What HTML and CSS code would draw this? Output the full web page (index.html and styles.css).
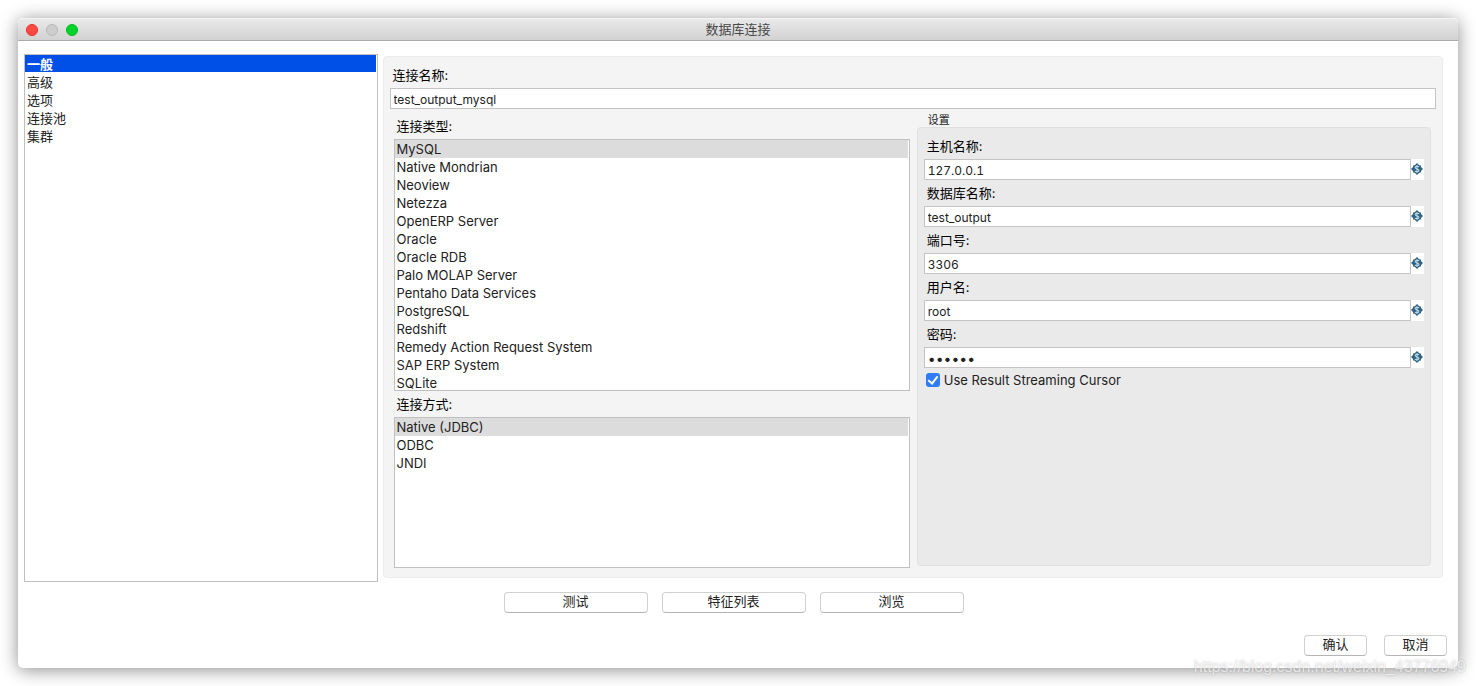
FILE: index.html
```html
<!DOCTYPE html>
<html lang="zh-CN">
<head>
<meta charset="utf-8">
<meta name="viewport" content="width=device-width, initial-scale=1">
<title>数据库连接</title>
<link rel="stylesheet" href="styles.css">
</head>
<body>
<svg class="sprite" aria-hidden="true">
  <symbol id="variable" viewBox="0 0 12 12">
    <path d="M6 0 L12 6 L6 12 L0 6 Z" fill="#2f6485"/>
    <path d="M2 2.500h8v7H2z" fill="#2f6485"/>
    <path d="M8 3.9C7.5 3 4.1 2.800 4.100 4.600C4.100 6.300 7.900 5.600 7.900 7.400C7.900 9.200 4.500 9 4 8M6 2v8" fill="none" stroke="#c3d7e3" stroke-width="1.100"/>
  </symbol>
</svg>
<main class="window">
  <header class="titlebar">
    <div class="lights">
      <button class="light close" type="button" aria-label="关闭"></button>
      <button class="light minimize" type="button" aria-label="最小化" disabled></button>
      <button class="light maximize" type="button" aria-label="最大化"></button>
    </div>
    <h1 class="title">数据库连接</h1>
  </header>
  <form class="content">
    <div class="workspace">
      <ul class="list categories" role="listbox" aria-label="分类">
        <li class="item active" role="option" aria-selected="true" tabindex="0">一般</li>
        <li class="item" role="option">高级</li>
        <li class="item" role="option">选项</li>
        <li class="item" role="option">连接池</li>
        <li class="item" role="option">集群</li>
      </ul>
      <section class="panel">
        <label class="label" for="name">连接名称:</label>
        <input class="input" id="name" type="text" value="test_output_mysql">
        <div class="columns">
          <div class="choices">
            <span class="label" id="type-label">连接类型:</span>
            <ul class="list types" role="listbox" aria-labelledby="type-label">
              <li class="item selected" role="option" aria-selected="true" tabindex="0">MySQL</li>
              <li class="item" role="option">Native Mondrian</li>
              <li class="item" role="option">Neoview</li>
              <li class="item" role="option">Netezza</li>
              <li class="item" role="option">OpenERP Server</li>
              <li class="item" role="option">Oracle</li>
              <li class="item" role="option">Oracle RDB</li>
              <li class="item" role="option">Palo MOLAP Server</li>
              <li class="item" role="option">Pentaho Data Services</li>
              <li class="item" role="option">PostgreSQL</li>
              <li class="item" role="option">Redshift</li>
              <li class="item" role="option">Remedy Action Request System</li>
              <li class="item" role="option">SAP ERP System</li>
              <li class="item" role="option">SQLite</li>
            </ul>
            <span class="label" id="access-label">连接方式:</span>
            <ul class="list access" role="listbox" aria-labelledby="access-label">
              <li class="item selected" role="option" aria-selected="true" tabindex="0">Native (JDBC)</li>
              <li class="item" role="option">ODBC</li>
              <li class="item" role="option">JNDI</li>
            </ul>
          </div>
          <fieldset class="settings">
            <legend class="legend">设置</legend>
            <div class="group">
              <label class="label" for="host">主机名称:</label>
              <div class="field"><input class="input" id="host" type="text" value="127.0.0.1"><span class="variable"><svg class="icon"><use href="#variable"/></svg></span></div>
              <label class="label" for="database">数据库名称:</label>
              <div class="field"><input class="input" id="database" type="text" value="test_output"><span class="variable"><svg class="icon"><use href="#variable"/></svg></span></div>
              <label class="label" for="port">端口号:</label>
              <div class="field"><input class="input" id="port" type="text" value="3306"><span class="variable"><svg class="icon"><use href="#variable"/></svg></span></div>
              <label class="label" for="user">用户名:</label>
              <div class="field"><input class="input" id="user" type="text" value="root"><span class="variable"><svg class="icon"><use href="#variable"/></svg></span></div>
              <label class="label" for="password">密码:</label>
              <div class="field"><input class="input password" id="password" type="password" value="secret"><span class="variable"><svg class="icon"><use href="#variable"/></svg></span></div>
              <label class="check"><input class="checkbox" type="checkbox" checked>Use Result Streaming Cursor</label>
            </div>
          </fieldset>
        </div>
      </section>
    </div>
    <div class="actions">
      <button class="button wide" type="button">测试</button>
      <button class="button wide" type="button">特征列表</button>
      <button class="button wide" type="button">浏览</button>
    </div>
  </form>
  <footer class="footer">
    <button class="button" type="button">确认</button>
    <button class="button" type="button">取消</button>
  </footer>
</main>
<span class="watermark">https://blog.csdn.net/weixin_43776949</span>
</body>
</html>
```
FILE: styles.css
```css
* {
  box-sizing: border-box;
}

body {
  margin: 0;
  min-height: 100vh;
  padding: 18px;
  display: flex;
  position: relative;
  overflow: hidden;
  background: #fff;
  color: #222;
  font: 13px/18px Inter, "Noto Sans CJK SC", sans-serif;
}

button,
input {
  font: inherit;
  color: inherit;
}

.sprite {
  position: absolute;
  width: 0;
  height: 0;
}

.window {
  flex: 1;
  min-width: 0;
  display: flex;
  flex-direction: column;
  border-radius: 5px;
  background: #fff;
  box-shadow: 0 2px 18px rgba(0, 0, 0, 0.45);
}

.titlebar {
  display: grid;
  grid-template-columns: 1fr auto 1fr;
  align-items: center;
  height: 23px;
  padding: 0 8px;
  border-top: 1px solid #f4f4f4;
  border-bottom: 1px solid #ababab;
  border-radius: 5px 5px 0 0;
  background: linear-gradient(#e9e9e9, #d2d2d2);
}

.lights {
  display: flex;
  gap: 8px;
}

.light {
  width: 12px;
  height: 12px;
  padding: 0;
  border: 1px solid #ec2f2b;
  border-radius: 50%;
  background: #ff4a43;
}

.minimize {
  border-color: #bababa;
  background: #cdcdcd;
}

.maximize {
  border-color: #00b81c;
  background: #00d42a;
}

.title {
  margin: 0;
  padding-bottom: 2px;
  color: #484848;
  font-size: 13px;
  font-weight: 400;
}

.content {
  flex: 1;
  display: flex;
  flex-direction: column;
  padding: 13px 15px 0 6px;
}

.workspace {
  flex: 1;
  display: grid;
  grid-template-columns: 1fr 3fr;
  gap: 5px;
}

.list {
  margin: 0;
  padding: 0 1px 0 0;
  overflow: hidden;
  list-style: none;
  border: 1px solid #c0c0c0;
  background: #fff;
}

.item {
  height: 18px;
  padding: 0 2px;
  line-height: 18px;
  white-space: nowrap;
}

.active {
  height: 17px;
  margin-bottom: 1px;
  background: #0050e8;
  color: #fff;
  font-weight: 700;
}

.selected {
  background: #dcdcdc;
}

.panel {
  display: flex;
  flex-direction: column;
  margin: 2px 0 4px;
  padding: 9px 6px;
  border: 1px solid #ebebeb;
  border-radius: 4px;
  background: #f4f4f4;
}

.label {
  flex: none;
  height: 22px;
  padding: 0 3px;
  color: #000;
}

.input {
  width: 100%;
  min-width: 0;
  height: 21px;
  padding: 2px 3px 0;
  border: 1px solid #c4c4c4;
  border-radius: 0;
  background: #fff;
  font-size: 12px;
  font-variant-numeric: tabular-nums;
}

.password {
  font-size: 14px;
}

.columns {
  flex: 1;
  display: grid;
  grid-template-columns: 516fr 514fr;
  gap: 7px;
  padding: 0 5px 0 4px;
}

.choices {
  display: flex;
  flex-direction: column;
  padding-top: 8px;
}

.types {
  flex: none;
  height: 252px;
  margin-bottom: 4px;
}

.access {
  flex: 1;
}

.settings {
  display: flex;
  flex-direction: column;
  min-width: 0;
  margin: 0;
  padding: 0 0 2px;
  border: 0;
}

.legend {
  height: 18px;
  padding: 2px 11px 0;
  font-size: 11px;
}

.group {
  flex: 1;
  display: flex;
  flex-direction: column;
  padding: 9px 6px;
  border: 1px solid #e0e0e0;
  border-radius: 4px;
  background: #eaeaea;
}

.field {
  display: flex;
  margin-bottom: 4px;
}

.variable {
  flex: none;
  width: 13px;
  padding-top: 4px;
  background: #fff;
}

.icon {
  display: block;
  width: 12px;
  height: 12px;
}

.check {
  display: flex;
  align-items: center;
  gap: 4px;
  padding-left: 2px;
  height: 16px;
}

.checkbox {
  appearance: none;
  width: 14px;
  height: 14px;
  margin: 0;
  display: grid;
  place-items: center;
  border-radius: 3px;
  background: #2f7cf6;
}

.checkbox:checked::before {
  content: "";
  box-sizing: border-box;
  width: 6px;
  height: 10px;
  margin-bottom: 2px;
  border: solid #fff;
  border-width: 0 2px 2px 0;
  transform: rotate(38deg);
}

.actions {
  display: flex;
  justify-content: center;
  gap: 14px;
  padding-top: 10px;
}

.button {
  width: 63px;
  height: 21px;
  padding: 0 4px 3px;
  border: 1px solid #d0d0d0;
  border-bottom-color: #b4b4b4;
  border-radius: 4px;
  background: #fff;
  line-height: 16px;
}

.wide {
  width: 144px;
}

.footer {
  display: flex;
  justify-content: flex-end;
  gap: 17px;
  padding: 22px 11px 12px;
}

.watermark {
  position: absolute;
  right: 10px;
  bottom: 9px;
  color: rgba(255, 255, 255, 0.7);
  font: 16px/20px "Liberation Sans", Arial, sans-serif;
  text-shadow: 0 0 2px rgba(0, 0, 0, 0.25);
}
```
